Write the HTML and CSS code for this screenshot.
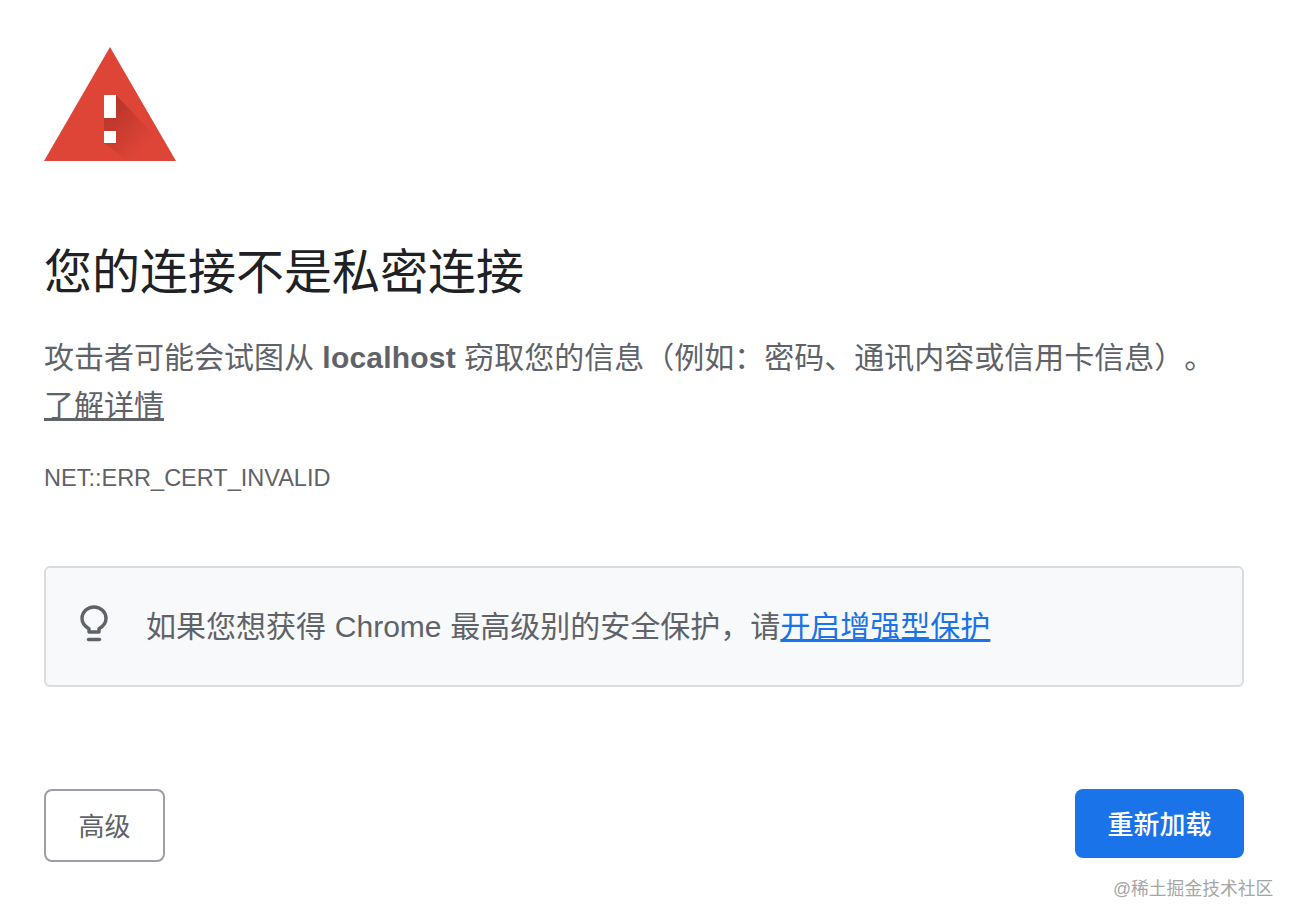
FILE: index.html
```html
<!DOCTYPE html>
<html lang="zh-CN">
<head>
    <meta charset="UTF-8">
    <meta name="viewport" content="width=device-width, initial-scale=1.0">
    <title>隐私设置错误</title>
    <link rel="stylesheet" href="styles.css">
</head>
<body>
    <div class="container">
        <svg class="warning-icon" width="132" height="114" viewBox="0 0 132 114">
            <defs>
                <linearGradient id="icon-shadow" x1="0.1" y1="0.1" x2="0.75" y2="0.8">
                    <stop offset="0" stop-color="#A82E24" stop-opacity="0.75"/>
                    <stop offset="1" stop-color="#A82E24" stop-opacity="0"/>
                </linearGradient>
            </defs>
            <polygon points="66,0 132,114 0,114" fill="#DF4537"/>
            <polygon points="72,48 113,91 100,114 84,114 60,96 60,71 72,71" fill="url(#icon-shadow)"/>
            <rect x="60" y="48" width="12" height="23" fill="#FFFFFF"/>
            <rect x="60" y="84" width="12" height="12" fill="#FFFFFF"/>
        </svg>

        <h1 class="title">您的连接不是私密连接</h1>

        <p class="message">攻击者可能会试图从 <strong>localhost</strong> 窃取您的信息（例如：密码、通讯内容或信用卡信息）。</p>
        <a class="learn-more" href="#">了解详情</a>

        <div class="error-code">NET::ERR_CERT_INVALID</div>

        <div class="tip-box">
            <svg class="bulb-icon" width="28" height="38" viewBox="0 0 28 38" fill="none" stroke="#5F6368" stroke-width="3.400">
                <path d="M9 27v-3.2C5 21.5 2 18 2 13.6 2 7 7.4 2 14 2s12 5 12 11.6c0 4.400-3 7.900-7 10.200V27z" stroke-linejoin="round"/>
                <path d="M8.500 34.500h11" stroke-linecap="round"/>
            </svg>
            <span class="tip-text">如果您想获得 Chrome 最高级别的安全保护，请<a href="#">开启增强型保护</a></span>
        </div>

        <div class="actions">
            <button class="btn btn-secondary">高级</button>
            <button class="btn btn-primary">重新加载</button>
        </div>
    </div>

    <div class="watermark">@稀土掘金技术社区</div>
</body>
</html>
```

FILE: styles.css
```css
:root {
    --primary-color: #1A73E8;
    --title-color: #202124;
    --text-color: #5F6368;
    --border-color: #DADCE0;
    --box-color: #F8F9FA;
}

* {
    margin: 0;
    padding: 0;
    box-sizing: border-box;
}

body {
    font-family: "Liberation Sans", "Noto Sans CJK SC", sans-serif;
    background-color: #FFFFFF;
    color: var(--text-color);
    text-spacing-trim: space-all;
}

.container {
    width: 1200px;
    margin-left: 44px;
    padding-top: 47px;
}

.warning-icon {
    display: block;
}

.title {
    margin-top: 78px;
    font-size: 48px;
    font-weight: 400;
    line-height: 68px;
    color: var(--title-color);
}

.message {
    margin-top: 27px;
    font-size: 30px;
    line-height: 48px;
}

.message strong {
    letter-spacing: 0.2px;
}

.learn-more {
    display: block;
    width: fit-content;
    font-size: 30px;
    line-height: 48px;
    color: var(--text-color);
}

.error-code {
    margin-top: 32px;
    font-size: 23.5px;
    line-height: 32px;
}

.tip-box {
    display: flex;
    align-items: center;
    height: 121px;
    margin-top: 72px;
    padding-left: 34px;
    padding-bottom: 6px;
    border: 2px solid var(--border-color);
    border-radius: 6px;
    background-color: var(--box-color);
}

.bulb-icon {
    flex-shrink: 0;
}

.tip-text {
    margin-left: 38px;
    font-size: 30px;
    word-spacing: 0.5px;
}

.tip-text a {
    color: var(--primary-color);
}

.actions {
    display: flex;
    justify-content: space-between;
    align-items: flex-start;
    margin-top: 102px;
}

.btn {
    font-family: inherit;
    font-size: 26px;
    padding-bottom: 2px;
    border-radius: 8px;
}

.btn-secondary {
    width: 121px;
    height: 73px;
    border: 2px solid #9AA0A6;
    background-color: #FFFFFF;
    color: var(--text-color);
}

.btn-primary {
    width: 169px;
    height: 69px;
    border: none;
    background-color: var(--primary-color);
    color: #FFFFFF;
    font-weight: 500;
}

.watermark {
    position: absolute;
    top: 878px;
    left: 1113px;
    font-size: 17.8px;
    line-height: 22px;
    color: #A6A6A6;
}
```
